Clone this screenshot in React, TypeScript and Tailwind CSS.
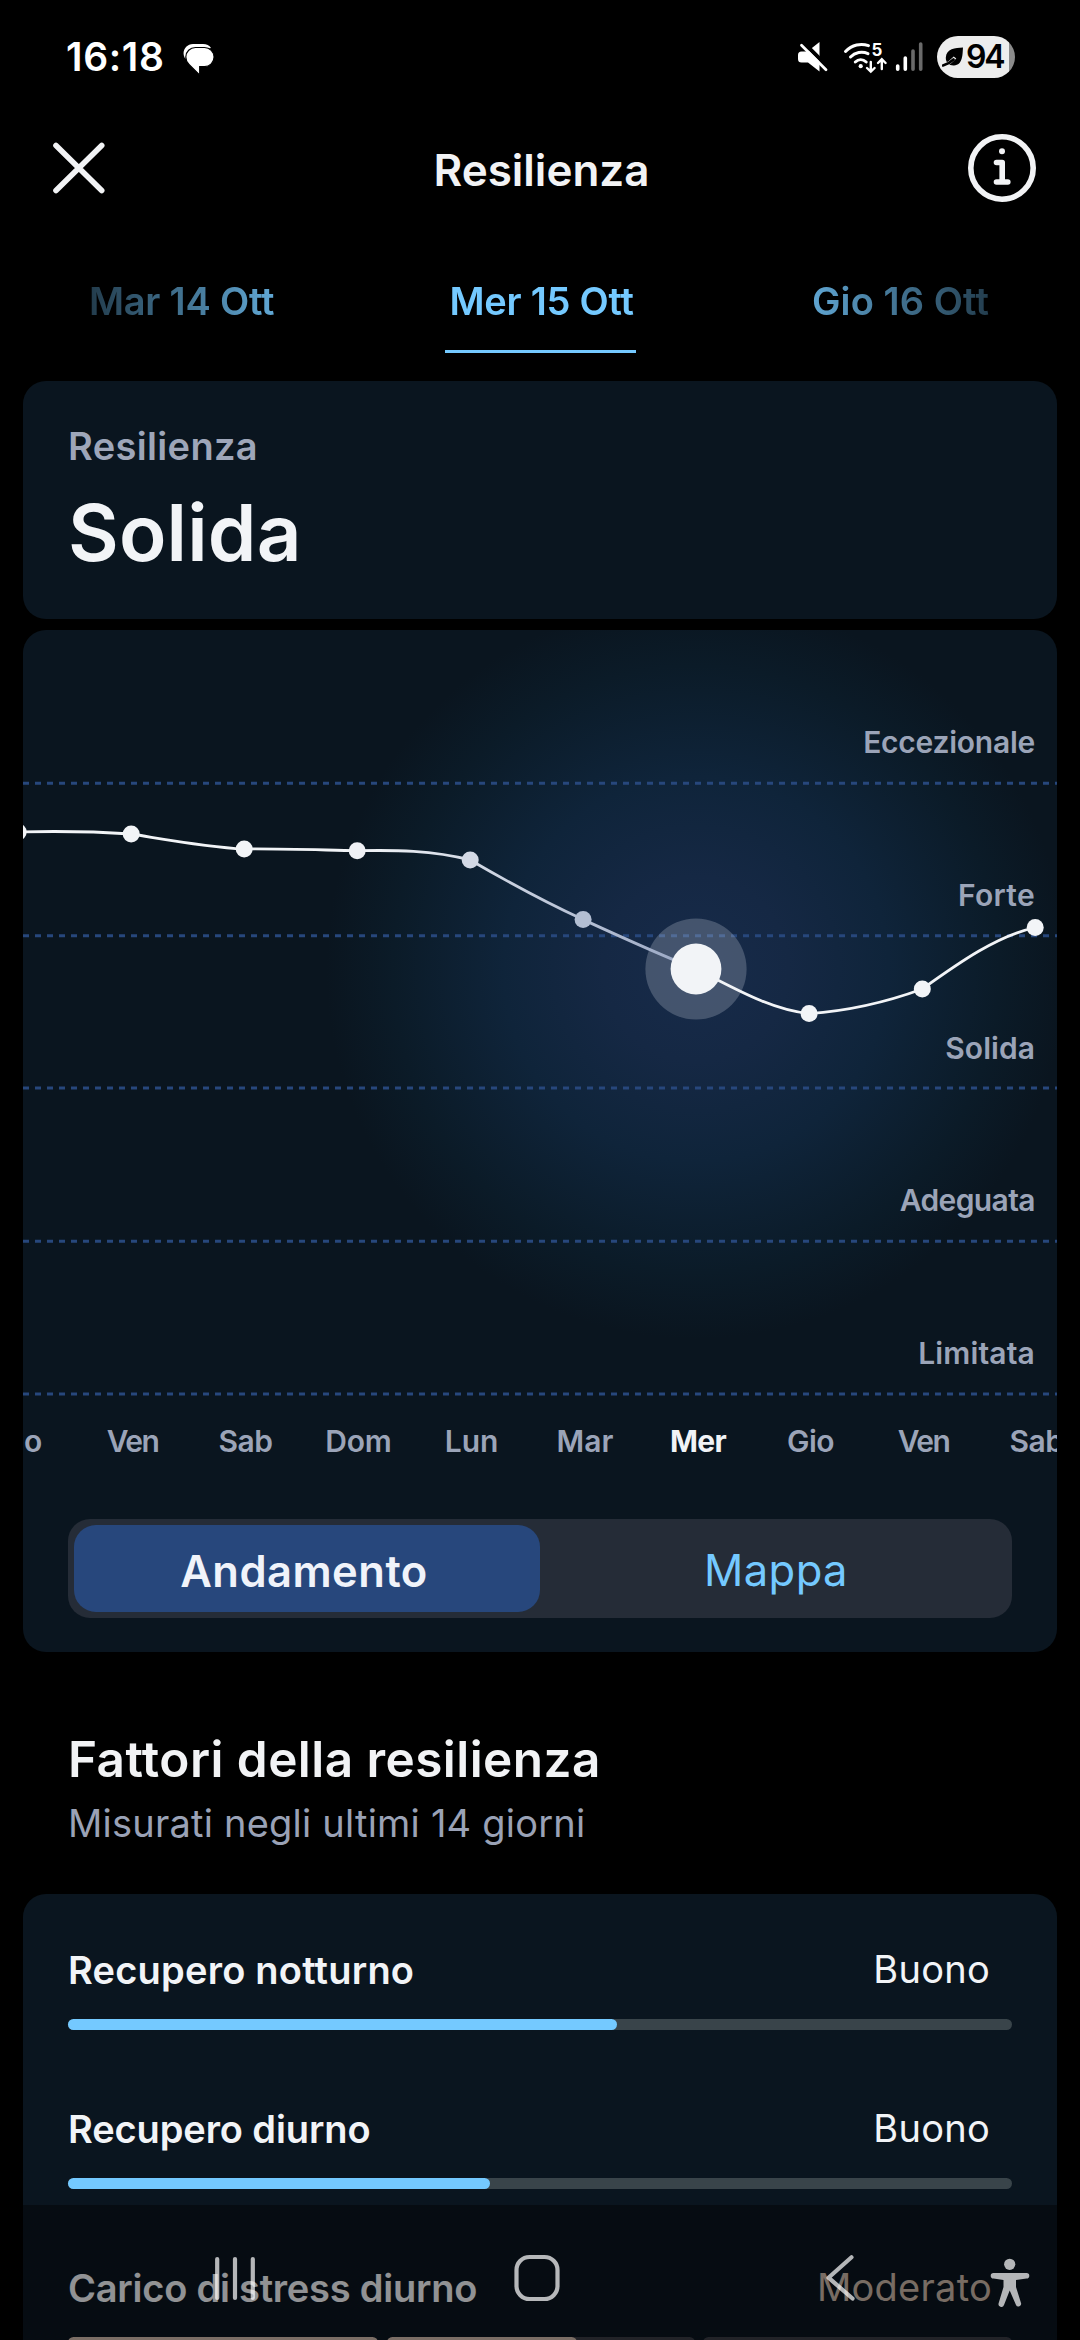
import React from "react";

const LEVELS = [
  { name: "Eccezionale", cls: "tracking-[-0.25px]" },
  { name: "Forte", cls: "tracking-[0.3px]" },
  { name: "Solida", cls: "tracking-[0.05px]" },
  { name: "Adeguata", cls: "tracking-[-0.6px]" },
  { name: "Limitata", cls: "tracking-[0.15px]" },
];

const DAYS = [
  { name: "Gio", cls: "pr-[3px] tracking-[0.2px]" },
  { name: "Ven", cls: "tracking-[-1.5px]" },
  { name: "Sab", cls: "tracking-[-0.5px]" },
  { name: "Dom", cls: "tracking-[-0.2px]" },
  { name: "Lun", cls: "tracking-[-0.1px]" },
  { name: "Mar", cls: "pl-px tracking-[0.1px]" },
  { name: "Mer", cls: "pl-px font-bold tracking-[-0.7px] text-[#f1f3f6]" },
  { name: "Gio", cls: "tracking-[-0.6px]" },
  { name: "Ven", cls: "tracking-[-1.5px]" },
  { name: "Sab", cls: "tracking-[-0.5px]" },
];

/* Chart coordinates: origin at the top left corner of the chart card. */
const POINTS = [
  { x: -4.8, y: 202, c: "#f2f4f7" },
  { x: 108.2, y: 204, c: "#f2f4f7" },
  { x: 221.2, y: 219, c: "#f2f4f7" },
  { x: 334.2, y: 220.7, c: "#eff1f5" },
  { x: 447.2, y: 230, c: "#d3d9e5" },
  { x: 560.1, y: 289.6, c: "#b3bed2" },
  { x: 786.1, y: 383.6, c: "#f2f4f7" },
  { x: 899.3, y: 359, c: "#f2f4f7" },
  { x: 1012.2, y: 297.5, c: "#f2f4f7" },
];

const GRID_Y = [153.2, 305.7, 457.9, 611.3, 764];

function Chart() {
  return (
    <svg className="absolute inset-0" width="1034" height="780" viewBox="0 0 1034 780" fill="none">
      <defs>
        <radialGradient id="glow" gradientUnits="userSpaceOnUse" cx="673" cy="339" r="370">
          <stop offset="0" stopColor="#172b4a" />
          <stop offset="0.25" stopColor="#152844" />
          <stop offset="0.52" stopColor="#0f243a" />
          <stop offset="0.82" stopColor="#0b1b28" />
          <stop offset="1" stopColor="#0a151f" />
        </radialGradient>
        <linearGradient id="past" gradientUnits="userSpaceOnUse" x1="334" y1="0" x2="673" y2="0">
          <stop offset="0" stopColor="#f2f4f7" />
          <stop offset="1" stopColor="#98a6c3" />
        </linearGradient>
      </defs>
      <circle cx="673" cy="339" r="370" fill="url(#glow)" />
      {GRID_Y.map((y) => (
        <path key={y} d={`M0 ${y}H1034`} stroke="#27477c" strokeWidth="3" strokeDasharray="6 6" />
      ))}
      <circle cx="673" cy="339" r="50.6" fill="#e9edf5" fillOpacity="0.22" />
      <path
        d="M-4.8 202C33 201 71 201.5 108.2 204C146 210 183 217 221.2 219C259 218.6 297 220 334.2 220.7"
        stroke="#f2f4f7"
        strokeWidth="2.8"
      />
      <path
        d="M334.2 220.7C372 220 409 220 447.2 230C485 252 522 272 560.1 289.6C598 307 635 324 673 339"
        stroke="url(#past)"
        strokeWidth="2.8"
      />
      <path
        d="M673 339C711 358 748 380 786.1 383.6C824 381 861 373 899.3 359C937 332 974 306 1012.2 297.5"
        stroke="#f2f4f7"
        strokeWidth="2.8"
      />
      {POINTS.map((p) => (
        <circle key={p.x} cx={p.x} cy={p.y} r="8.5" fill={p.c} />
      ))}
      <circle cx="673" cy="339" r="25.4" fill="#f2f4f7" />
    </svg>
  );
}

function StatusBar() {
  return (
    <div className="flex h-[114px] items-center justify-between pr-[65px] pl-[66px]">
      <div className="flex items-center">
        <span className="w-[117px] text-[39px] font-semibold leading-[46px] tracking-[0.66px] text-white">16:18</span>
        <svg width="32" height="32" viewBox="183 43 32 32" className="mt-[3px]">
          <path
            d="M184.5 57.5C181.5 51 186 44 193 44H203C206.500 44 209.500 45.500 211 48L196 51L187 60Z"
            fill="#fff"
          />
          <path
            d="M195.500 47.500H204.500A9.600 9.600 0 0 1 204.500 66.700H199.700V73.500C199.700 74.300 199 74.300 198.500 73.800L189 64.500C187 62.600 185.800 60 185.800 57.100A9.600 9.600 0 0 1 195.500 47.500Z"
            fill="#fff"
            stroke="#000"
            strokeWidth="1.2"
          />
        </svg>
      </div>
      <div className="flex items-center">
        <svg width="32" height="34" viewBox="797 40 32 34">
          <path d="M798 55Q798 51.500 801.500 51.500H807.500L819.500 42V71.500L808 62.500H801.500Q798 62.500 798 59Z" fill="#fff" />
          <path d="M801.500 40.500L829.500 68.500" stroke="#000" strokeWidth="4" />
          <path d="M801.500 45.200L826 69.800" stroke="#fff" strokeWidth="2.8" strokeLinecap="round" />
        </svg>
        <svg width="46" height="34" viewBox="843 40 46 34" className="ml-[14px]" fill="none" stroke="#fff" strokeWidth="3" strokeLinecap="round">
          <path d="M845.500 51.500C852 44.500 861 43 868.500 45.600" />
          <path d="M850.500 57C855 52.300 862 51 868 53.600" />
          <path d="M855.300 62C858.500 59 863 59 866.200 62" />
          <circle cx="860.700" cy="66.200" r="2.100" fill="#fff" stroke="none" />
          <path d="M870.800 62V71M867 68L870.800 71.700L874.600 68M881.800 69V60M878 63L881.800 59.200L885.600 63" strokeWidth="2.400" />
          <text x="871.500" y="56" fill="#fff" stroke="none" fontFamily="Inter" fontWeight="700" fontSize="17">5</text>
        </svg>
        <svg width="28" height="34" viewBox="895 40 28 34" className="ml-[6px]" strokeWidth="3.600" strokeLinecap="round">
          <path d="M897.700 66V69.300M905.300 58V69.300" stroke="#fff" />
          <path d="M913 51V69.300M920.700 44V69.300" stroke="#6a6a6a" />
        </svg>
        <div className="ml-[14px] flex h-[42px] w-[78px] items-center rounded-full bg-[linear-gradient(90deg,#ededed_72px,#8b8b8b_72px)] pl-[5px]">
          <svg width="22" height="20" viewBox="942 47 22 20">
            <path d="M963 47.500C962.500 54 963 65 954 65.500C949.500 65.800 945.500 62.500 945.800 57.500C946.500 48.500 955 47.800 963 47.500Z" fill="#000" />
            <path d="M943 66.500C949 63.500 952 61 955 57.500" stroke="#ededed" strokeWidth="3.400" fill="none" />
            <path d="M943 65.500C948 64 951 62 953.500 59.500" stroke="#000" strokeWidth="2.600" strokeLinecap="round" fill="none" />
          </svg>
          <span className="ml-[2px] text-[32px] font-semibold leading-[42px] tracking-[-2.1px] text-black">94</span>
        </div>
      </div>
    </div>
  );
}

function Header() {
  return (
    <div className="flex h-[112px] items-center justify-between pr-[43px] pl-[50px]">
      <svg width="58" height="58" viewBox="50 139 58 58" className="-mt-[4px]">
        <path d="M56 145.500L101.700 190.500M101.700 145.500L56 190.500" stroke="#f2f3f5" strokeWidth="5.600" strokeLinecap="round" />
      </svg>
      <h1 className="ml-[8px] text-[44px] font-semibold leading-[54px] text-[#f2f3f5]">Resilienza</h1>
      <svg width="70" height="70" viewBox="967 133 70 70" className="-mt-[4px]" fill="none" stroke="#f2f3f5" strokeLinecap="round" strokeLinejoin="round">
        <circle cx="1002" cy="168" r="31.200" strokeWidth="5.600" />
        <path d="M996.500 162.500H1002.200V182M996.500 182H1007.800" strokeWidth="5.600" />
        <circle cx="1002" cy="151.200" r="3" fill="#f2f3f5" stroke="none" />
      </svg>
    </div>
  );
}

function Tabs() {
  return (
    <div className="grid h-[127px] grid-cols-3 pt-[52px] text-center text-[38px] font-semibold leading-[46px] text-[#74c9ff] [mask-image:linear-gradient(90deg,transparent_-14px,#000_332px,#000_750px,transparent_1094px)]">
      <div className="pl-[3px] tracking-[-0.21px]">Mar 14 Ott</div>
      <div className="mx-auto flex w-[191px] flex-col justify-between">
        <span className="pl-[3px] tracking-[-0.24px]">Mer 15 Ott</span>
        <span className="h-[3px] bg-[#74c9ff]" />
      </div>
      <div className="pl-px tracking-[0.1px]">Gio 16 Ott</div>
    </div>
  );
}

function Factor({ name, value, fill, tracking }: { name: string; value: string; fill: number; tracking: string }) {
  return (
    <div className="mb-[75.5px]">
      <div className="flex justify-between pr-[22px] text-[38px] leading-[46px] text-[#f2f4f7]">
        <span className={`font-semibold ${tracking}`}>{name}</span>
        <span className="-mt-px tracking-[0.28px]">{value}</span>
      </div>
      <div className="mt-[26.200px] h-[11px] rounded-full bg-[#39444a]">
        <div className="h-full rounded-full bg-[#74c9ff]" style={{ width: fill }} />
      </div>
    </div>
  );
}

function NavBar() {
  return (
    <div className="absolute inset-x-0 bottom-0 flex h-[135px] items-center bg-black/40 pt-[10px] pl-[213px]">
      <svg width="44" height="52" viewBox="213 2251 44 52" stroke="#fff" strokeOpacity="0.7" strokeWidth="4.200" strokeLinecap="round">
        <path d="M217.200 2258V2297M235 2258V2297M252.800 2258V2297" />
      </svg>
      <svg width="50" height="52" viewBox="512 2251 50 52" className="ml-[255px]" fill="none" stroke="#b6b8ba" strokeWidth="4.200">
        <rect x="516.500" y="2256" width="41" height="42" rx="13" />
      </svg>
      <svg width="32" height="52" viewBox="824 2251 32 52" className="ml-[262px]" fill="none" stroke="#fff" strokeOpacity="0.7" strokeWidth="4.200" strokeLinecap="round" strokeLinejoin="round">
        <path d="M851.500 2256.300L828.500 2276.700L852.500 2297.500" />
      </svg>
      <svg width="40" height="52" viewBox="990 2256 40 52" className="mt-[10px] ml-[134px]" fill="#b4b6b8">
        <circle cx="1009.700" cy="2263.300" r="5.600" />
        <path d="M993.500 2272H1026.500A2.800 2.800 0 0 1 1026.500 2277.600L1016 2279V2286L1021 2302A2.700 2.700 0 0 1 1016 2304L1009.700 2289.500L1004 2304A2.700 2.700 0 0 1 998.700 2302L1003.500 2286V2279L993.500 2277.600A2.800 2.800 0 0 1 993.500 2272Z" />
      </svg>
    </div>
  );
}

export default function App() {
  return (
    <div className="relative h-[2340px] w-[1080px] overflow-hidden bg-black font-[Inter,sans-serif]">
      <StatusBar />
      <Header />
      <Tabs />

      <section className="mx-[23px] mt-[28px] h-[238px] rounded-[23px] bg-[#0a151f] pt-[42px] pl-[45px]">
        <div className="text-[38px] font-semibold leading-[46px] tracking-[0.35px] text-[#9ea6b9]">Resilienza</div>
        <div className="mt-[17px] text-[78px] font-semibold leading-[94px] tracking-[0.2px] text-[#f2f4f7]">Solida</div>
      </section>

      <section className="mx-[23px] mt-[11px] h-[1022px] overflow-hidden rounded-[23px] bg-[#0a151f]">
        <div className="relative h-[764px]">
          <Chart />
          <div className="relative text-right text-[30px] font-semibold leading-[40px] text-[#9ba4b8]">
            {LEVELS.map((l) => (
              <div key={l.name} className={`flex h-[152.700px] items-end justify-end pr-[22px] pb-[20.500px] ${l.cls}`}>
                {l.name}
              </div>
            ))}
          </div>
        </div>
        <div className="-ml-[60px] flex h-[94px] w-[1130px] items-center text-center text-[30px] font-semibold leading-[40px] text-[#9ba4b8]">
          {DAYS.map((d, i) => (
            <span key={i} className={`w-[113px] shrink-0 ${d.cls}`}>
              {d.name}
            </span>
          ))}
        </div>
        <div className="mx-[45px] mt-[31px] grid h-[99px] grid-cols-2 rounded-[22px] bg-[#252c37] text-center text-[43.500px] leading-[80px]">
          <div className="my-[6px] ml-[6px] rounded-[22px] bg-[#27477c] pt-[6px] pr-[6px] font-semibold tracking-[0.48px] text-[#f0f3fa]">
            Andamento
          </div>
          <div className="pt-[11px] tracking-[0.4px] text-[#74c9ff]">Mappa</div>
        </div>
      </section>

      <div className="mt-[77px] pl-[68px]">
        <h2 className="text-[49.500px] font-semibold leading-[60px] tracking-[0.45px] text-[#f2f3f5]">Fattori della resilienza</h2>
        <p className="mt-[11px] text-[38px] leading-[46px] tracking-[0.22px] text-[#9aa2b6]">Misurati negli ultimi 14 giorni</p>
      </div>

      <section className="mx-[23px] mt-[48px] h-[480px] rounded-t-[23px] bg-[#0a151f] px-[45px] pt-[53px]">
        <Factor name="Recupero notturno" value="Buono" fill={549} tracking="tracking-[0.22px]" />
        <Factor name="Recupero diurno" value="Buono" fill={422} tracking="tracking-[-0.11px]" />
        <div className="flex justify-between pt-px pr-[20px] text-[38px] leading-[46px] text-[#f2f4f7]">
          <span className="font-semibold tracking-[-0.23px]">Carico di stress diurno</span>
          <span className="-mt-px tracking-[0.25px] text-[#c8b4a5]">Moderato</span>
        </div>
        <div className="mt-[25.200px] grid grid-cols-[310px_308px_309px] gap-x-[8.500px]">
          <div className="h-[11px] rounded-full bg-[#cdb8aa]" />
          <div className="h-[11px] rounded-full bg-[#3a3b44]">
            <div className="h-full w-[190px] rounded-full bg-[#cdb8aa]" />
          </div>
          <div className="h-[11px] rounded-full bg-[#3a3b44]" />
        </div>
      </section>

      <NavBar />
    </div>
  );
}
